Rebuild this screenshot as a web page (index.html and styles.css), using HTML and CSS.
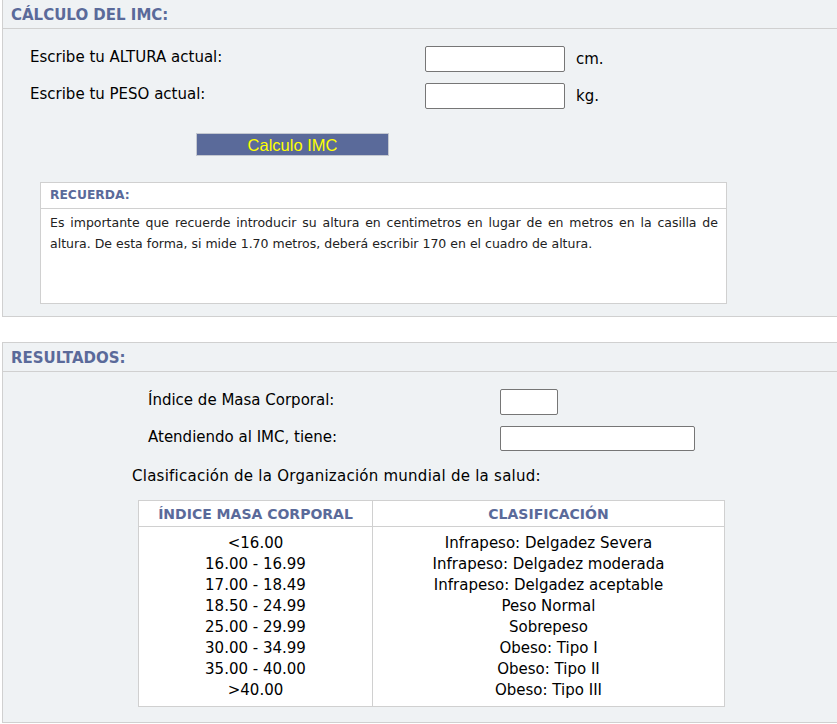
FILE: index.html
```html
<!DOCTYPE html>
<html lang="es">
<head>
<meta charset="utf-8">
<title>Cálculo del IMC</title>
<link rel="stylesheet" href="styles.css">
</head>
<body>
<section class="panel panel-calc">
  <h2 class="panel-title">CÁLCULO DEL IMC:</h2>
  <div class="panel-body">
    <div class="form-grid">
      <label class="form-label" for="altura">Escribe tu ALTURA actual:</label>
      <input class="field field-md" id="altura" type="text">
      <span class="unit">cm.</span>
      <label class="form-label" for="peso">Escribe tu PESO actual:</label>
      <input class="field field-md" id="peso" type="text">
      <span class="unit">kg.</span>
    </div>
    <div class="btn-row">
      <button class="btn-calc" type="button">Calculo IMC</button>
    </div>
    <div class="note">
      <h3 class="note-title">RECUERDA:</h3>
      <p class="note-text">Es importante que recuerde introducir su altura en centimetros en lugar de en metros en la casilla de altura. De esta forma, si mide 1.70 metros, deberá escribir 170 en el cuadro de altura.</p>
    </div>
  </div>
</section>

<section class="panel panel-results">
  <h2 class="panel-title">RESULTADOS:</h2>
  <div class="panel-body">
    <div class="result-grid">
      <label class="result-label" for="imc">Índice de Masa Corporal:</label>
      <input class="field field-sm" id="imc" type="text">
      <label class="result-label" for="estado">Atendiendo al IMC, tiene:</label>
      <input class="field field-lg" id="estado" type="text">
    </div>
    <p class="oms">Clasificación de la Organización mundial de la salud:</p>
    <table class="imc-table">
      <thead>
        <tr><th class="col-a">ÍNDICE MASA CORPORAL</th><th class="col-b">CLASIFICACIÓN</th></tr>
      </thead>
      <tbody>
        <tr>
          <td>&lt;16.00<br>16.00 - 16.99<br>17.00 - 18.49<br>18.50 - 24.99<br>25.00 - 29.99<br>30.00 - 34.99<br>35.00 - 40.00<br>&gt;40.00</td>
          <td>Infrapeso: Delgadez Severa<br>Infrapeso: Delgadez moderada<br>Infrapeso: Delgadez aceptable<br>Peso Normal<br>Sobrepeso<br>Obeso: Tipo I<br>Obeso: Tipo II<br>Obeso: Tipo III</td>
        </tr>
      </tbody>
    </table>
  </div>
</section>
</body>
</html>
```

FILE: styles.css
```css
* { box-sizing: border-box; }

body {
  margin: 0;
  background: #ffffff;
  font-family: "DejaVu Sans", Verdana, sans-serif;
  color: #000;
}

.panel {
  margin: 0 0 0 2px;
  background: #eff2f4;
  border: 1px solid #d0d0d0;
  border-right: 0;
}

.panel-calc { border-top: 0; }
.panel-results { margin-top: 25px; }

.panel-title {
  margin: 0;
  height: 29px;
  padding: 7px 0 0 8px;
  border-bottom: 1px solid #d0d0d0;
  font-size: 15px;
  font-weight: bold;
  color: #5a6a9a;
  line-height: 16px;
}

.panel-calc .panel-body { padding: 17px 0 12px 0; }

.form-grid {
  display: grid;
  grid-template-columns: 395px 140px auto;
  row-gap: 11px;
  align-items: center;
  padding-left: 27px;
}

.form-label, .result-label {
  font-size: 15px;
  line-height: 18px;
  margin-bottom: 4px;
}

.unit {
  font-size: 15px;
  line-height: 18px;
  margin-left: 11px;
}

.field {
  height: 26px;
  margin: 0;
  border: 1px solid #767676;
  border-radius: 2px;
  background: #fff;
  padding: 0 4px;
}
.field-md { width: 140px; }
.field-sm { width: 58px; }
.field-lg { width: 195px; height: 25px; }

.btn-row {
  padding-left: 193px;
  margin-top: 24px;
}

.btn-calc {
  display: block;
  width: 193px;
  height: 23px;
  margin: 0;
  padding: 0;
  background: #5a6a9a;
  border: 1px solid #c4c8d0;
  color: #ffff00;
  font-family: "Liberation Sans", Arial, sans-serif;
  font-size: 16.5px;
  line-height: 20px;
}

.note {
  margin: 26px 0 0 37px;
  width: 687px;
  height: 122px;
  background: #fff;
  border: 1px solid #d0d0d0;
}

.note-title {
  margin: 0;
  height: 26px;
  padding: 5px 0 0 9px;
  border-bottom: 1px solid #d0d0d0;
  font-size: 12.3px;
  line-height: 14px;
  font-weight: bold;
  color: #5a6a9a;
}

.note-text {
  margin: 0;
  padding: 3px 8px 0 9px;
  font-size: 12.5px;
  line-height: 21px;
  text-align: justify;
  color: #222;
}

.panel-results .panel-body { padding: 17px 0 15px 0; }

.result-grid {
  display: grid;
  grid-template-columns: 352px auto;
  row-gap: 11px;
  align-items: center;
  justify-items: start;
  padding-left: 145px;
}

.oms {
  margin: 13px 0 0 129px;
  font-size: 15px;
  line-height: 24px;
  letter-spacing: 0.25px;
}

.imc-table {
  margin: 12px 0 0 135px;
  width: 587px;
  border-collapse: collapse;
  background: #fff;
  border: 1px solid #d0d0d0;
}

.imc-table th {
  height: 26px;
  padding: 0;
  border: 1px solid #d0d0d0;
  font-size: 14px;
  font-weight: bold;
  color: #5a6a9a;
  text-align: center;
}

.imc-table .col-a { width: 234px; }

.imc-table td {
  padding: 6px 0 5px 0;
  border: 1px solid #d0d0d0;
  font-size: 15px;
  line-height: 21px;
  text-align: center;
  vertical-align: top;
}
```
